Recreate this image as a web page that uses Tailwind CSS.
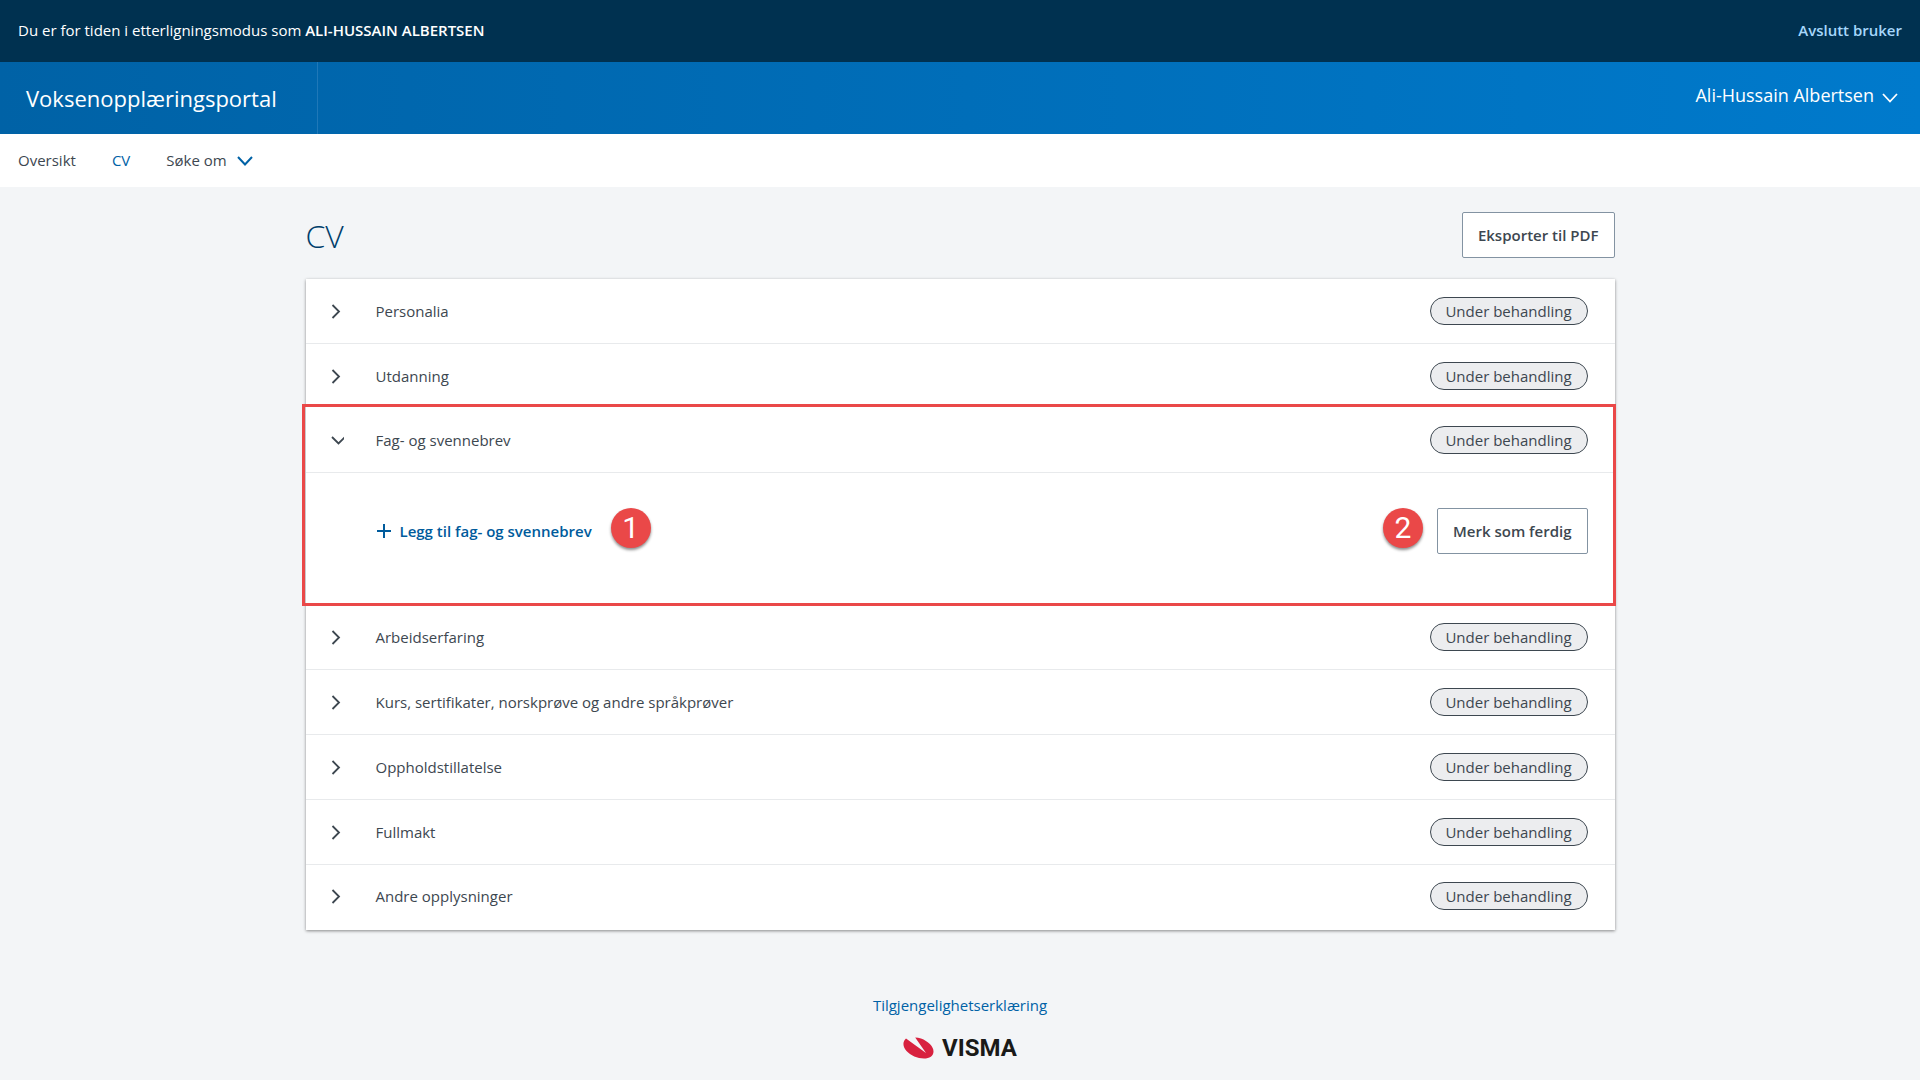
<!DOCTYPE html>
<html lang="no">
<head>
    <meta charset="UTF-8">
    <meta name="viewport" content="width=device-width, initial-scale=1.0">
    <title>CV - Voksenopplæringsportal</title>
    <script src="https://cdn.jsdelivr.net/npm/@tailwindcss/browser@4"></script>
</head>
<body class="min-h-screen bg-[#f3f5f7] font-['Open_Sans','Noto_Sans',sans-serif] text-[15px] leading-5 text-[#3d4750]">

<!-- Impersonation bar -->
<div class="flex h-[62px] items-center justify-between bg-[#003150] px-[18px] pb-0.5 text-white">
    <p>Du er for tiden i etterligningsmodus som <strong class="font-semibold">ALI-HUSSAIN ALBERTSEN</strong></p>
    <a href="#" class="font-semibold text-[#a6d7fb]">Avslutt bruker</a>
</div>

<!-- Header -->
<header class="flex h-[72px] items-center justify-between bg-linear-to-r from-[#0062a6] to-[#007acc] text-white">
    <a href="#" class="flex h-full w-[318px] items-center border-r border-[#1f78b8] pl-[26px] text-[22px]">Voksenopplæringsportal</a>
    <button type="button" class="mr-[22px] flex items-center gap-2 pb-1.5 text-[18px]">
        Ali-Hussain Albertsen
        <svg class="mt-1 h-4 w-4" viewBox="0 0 16 16" fill="none" stroke="currentColor" stroke-width="1.800"><path d="M1 5l7 7.500 7-7.500"/></svg>
    </button>
</header>

<!-- Navbar -->
<nav class="flex h-[53px] items-center gap-9 bg-white px-[18px] pb-0.5">
    <a href="#">Oversikt</a>
    <a href="#" class="font-medium text-[#0062a6]">CV</a>
    <button type="button" class="flex items-center gap-2.5">
        Søke om
        <svg class="h-4 w-4 text-[#0062a6]" viewBox="0 0 16 16" fill="none" stroke="currentColor" stroke-width="2"><path d="M1 5l7 7.500 7-7.500"/></svg>
    </button>
</nav>

<!-- Content -->
<main class="mx-auto w-full max-w-[1309px] pt-[25px]">
    <div class="flex h-[46px] items-center justify-between">
        <h1 class="pt-0.5 text-[32px] font-light text-[#003e6b]">CV</h1>
        <button type="button" class="h-full rounded-xs border border-[#8393a2] bg-white px-[15px] font-semibold">Eksporter til PDF</button>
    </div>

    <div class="mt-[21px] bg-white shadow-[0_1px_3px_rgba(0,0,0,0.45)]">
        <button type="button" class="flex h-[65px] w-full items-center border-b border-[#e8eaec] pr-[27px] pb-px pl-[22px] text-left">
            <svg class="mr-8 h-4 w-4" viewBox="0 0 16 16" fill="none" stroke="currentColor" stroke-width="1.800"><path d="M4.500 2l6.500 6.500-6.500 6.500"/></svg>
            <span class="flex-1">Personalia</span>
            <span class="w-[158px] rounded-full border border-[#3d4750] bg-[#ecedef] py-[3px] text-center">Under behandling</span>
        </button>
        <button type="button" class="flex h-[64px] w-full items-center pr-[27px] pb-px pl-[22px] text-left">
            <svg class="mr-8 h-4 w-4" viewBox="0 0 16 16" fill="none" stroke="currentColor" stroke-width="1.800"><path d="M4.500 2l6.500 6.500-6.500 6.500"/></svg>
            <span class="flex-1">Utdanning</span>
            <span class="w-[158px] rounded-full border border-[#3d4750] bg-[#ecedef] py-[3px] text-center">Under behandling</span>
        </button>

        <!-- Open section -->
        <section class="relative">
            <button type="button" class="flex h-[65px] w-full items-center border-b border-[#e8eaec] pr-[27px] pb-px pl-[22px] text-left">
                <svg class="mr-8 h-4 w-4" viewBox="0 0 16 16" fill="none" stroke="currentColor" stroke-width="1.800"><path d="M4.500 5l6.500 6.500 6.500-6.500" transform="translate(-.5 0)"/></svg>
                <span class="flex-1">Fag- og svennebrev</span>
                <span class="w-[158px] rounded-full border border-[#3d4750] bg-[#ecedef] py-[3px] text-center">Under behandling</span>
            </button>
            <div class="flex justify-between pt-[35px] pr-[27px] pb-[51px] pl-[70px]">
                <div class="relative flex h-[46px]">
                    <button type="button" class="flex items-center gap-2 pb-px font-semibold text-[#005b9c]">
                        <svg class="h-4 w-4" viewBox="0 0 16 16" fill="none" stroke="currentColor" stroke-width="2"><path d="M8 1v14M1 8h14"/></svg>
                        Legg til fag- og svennebrev
                    </button>
                    <span class="absolute top-0 left-full ml-[19px] flex h-10 w-10 items-center justify-center rounded-full bg-[#ea4848] font-[Roboto,sans-serif] text-[30px] text-white shadow-[0_2px_3px_rgba(0,0,0,0.45)]">1</span>
                </div>
                <div class="relative flex h-[46px]">
                    <span class="absolute top-0 right-full mr-3.5 flex h-10 w-10 items-center justify-center rounded-full bg-[#ea4848] font-[Roboto,sans-serif] text-[30px] text-white shadow-[0_2px_3px_rgba(0,0,0,0.45)]">2</span>
                    <button type="button" class="rounded-xs border border-[#8393a2] bg-white px-[15px] pb-px font-semibold">Merk som ferdig</button>
                </div>
            </div>
            <div class="pointer-events-none absolute -top-1 -right-px -bottom-px -left-1 border-3 border-[#ea4848]"></div>
        </section>

        <button type="button" class="flex h-[65px] w-full items-center border-b border-[#e8eaec] pr-[27px] pl-[22px] text-left">
            <svg class="mr-8 h-4 w-4" viewBox="0 0 16 16" fill="none" stroke="currentColor" stroke-width="1.800"><path d="M4.500 2l6.500 6.500-6.500 6.500"/></svg>
            <span class="flex-1">Arbeidserfaring</span>
            <span class="w-[158px] rounded-full border border-[#3d4750] bg-[#ecedef] py-[3px] text-center">Under behandling</span>
        </button>
        <button type="button" class="flex h-[65px] w-full items-center border-b border-[#e8eaec] pr-[27px] pl-[22px] text-left">
            <svg class="mr-8 h-4 w-4" viewBox="0 0 16 16" fill="none" stroke="currentColor" stroke-width="1.800"><path d="M4.500 2l6.500 6.500-6.500 6.500"/></svg>
            <span class="flex-1">Kurs, sertifikater, norskprøve og andre språkprøver</span>
            <span class="w-[158px] rounded-full border border-[#3d4750] bg-[#ecedef] py-[3px] text-center">Under behandling</span>
        </button>
        <button type="button" class="flex h-[65px] w-full items-center border-b border-[#e8eaec] pr-[27px] pl-[22px] text-left">
            <svg class="mr-8 h-4 w-4" viewBox="0 0 16 16" fill="none" stroke="currentColor" stroke-width="1.800"><path d="M4.500 2l6.500 6.500-6.500 6.500"/></svg>
            <span class="flex-1">Oppholdstillatelse</span>
            <span class="w-[158px] rounded-full border border-[#3d4750] bg-[#ecedef] py-[3px] text-center">Under behandling</span>
        </button>
        <button type="button" class="flex h-[65px] w-full items-center border-b border-[#e8eaec] pr-[27px] pl-[22px] text-left">
            <svg class="mr-8 h-4 w-4" viewBox="0 0 16 16" fill="none" stroke="currentColor" stroke-width="1.800"><path d="M4.500 2l6.500 6.500-6.500 6.500"/></svg>
            <span class="flex-1">Fullmakt</span>
            <span class="w-[158px] rounded-full border border-[#3d4750] bg-[#ecedef] py-[3px] text-center">Under behandling</span>
        </button>
        <button type="button" class="flex h-[65px] w-full items-center pr-[27px] pb-[3px] pl-[22px] text-left">
            <svg class="mr-8 h-4 w-4" viewBox="0 0 16 16" fill="none" stroke="currentColor" stroke-width="1.800"><path d="M4.500 2l6.500 6.500-6.500 6.500"/></svg>
            <span class="flex-1">Andre opplysninger</span>
            <span class="w-[158px] rounded-full border border-[#3d4750] bg-[#ecedef] py-[3px] text-center">Under behandling</span>
        </button>
    </div>
</main>

<!-- Footer -->
<footer class="flex flex-col items-center pt-[65px]">
    <a href="#" class="text-[#0062a6]">Tilgjengelighetserklæring</a>
    <div class="mt-[22px] flex items-center gap-2">
        <svg class="h-[22px] w-[31px]" viewBox="0 0 31 22"><path fill="#d8213f" d="M3 1.500C-.5 4.500-.5 9.500 3.500 14c4 4.500 11 7.500 17.500 7.500 5.500 0 9.500-2.500 9.500-7 0-5-5.500-10.500-12.500-13-2-.7-4-1-5.800-1L23 16z"/></svg>
        <span class="font-[Roboto,sans-serif] text-2xl leading-5 font-bold text-[#1a1a18]">VISMA</span>
    </div>
</footer>

</body>
</html>
